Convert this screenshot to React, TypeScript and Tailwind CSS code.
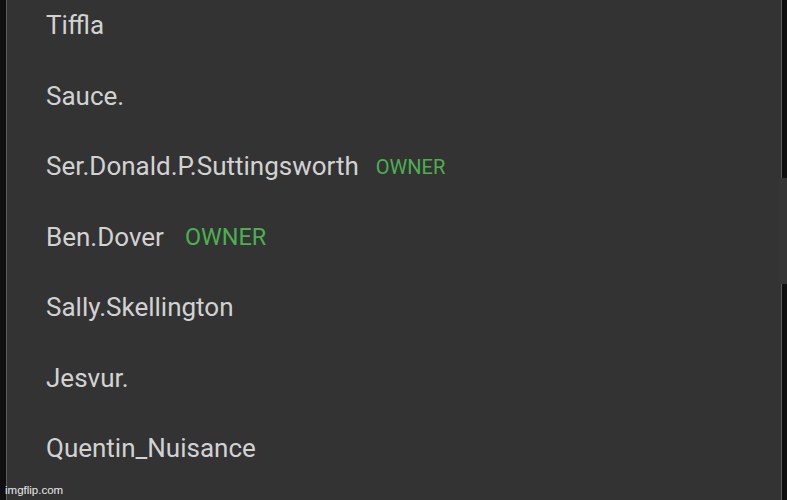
const members: { name: string; owner?: boolean; badge?: string }[] = [
  { name: 'Tiffla' },
  { name: 'Sauce.' },
  { name: 'Ser.Donald.P.Suttingsworth', owner: true, badge: 'ml-[17px] pt-[2px] text-[20px]' },
  { name: 'Ben.Dover', owner: true, badge: 'ml-[21px] pt-[1px] text-[23.4px]' },
  { name: 'Sally.Skellington' },
  { name: 'Jesvur.' },
  { name: 'Quentin_Nuisance' },
]

export default function App() {
  return (
    <div className="relative flex h-[500px] w-[787px] overflow-hidden bg-[#111111] font-['Roboto',sans-serif]">
      <div className="w-[6px] shrink-0 bg-[#0f0f0f]" />
      <div className="w-[1px] shrink-0 bg-[#5a5a5a]" />
      <div className="flex flex-1 flex-col gap-[40.5px] bg-[#333333] pl-[39px] pt-[10px]">
        {members.map((m) => (
          <div key={m.name} className="flex h-[30px] items-center">
            <span className="text-[26px] leading-[30px] text-[#d2d2d2]">{m.name}</span>
            {m.owner && (
              <span className={`${m.badge} leading-[30px] text-[#4caf50]`}>OWNER</span>
            )}
          </div>
        ))}
      </div>
      <div className="w-[1px] shrink-0 bg-[#5a5a5a]" />
      <div className="w-[5px] shrink-0 bg-[#0f0f0f]" />

      {/* panel edge sticking out on the right */}
      <div className="absolute right-0 top-[178px] h-[106px] w-[8px] bg-[#353535]" />

      <span className="absolute bottom-[3px] left-[5px] font-['Liberation_Sans',sans-serif] text-[11.5px] leading-[14px] text-[#e8e8e8]">
        imgflip.com
      </span>
    </div>
  )
}
